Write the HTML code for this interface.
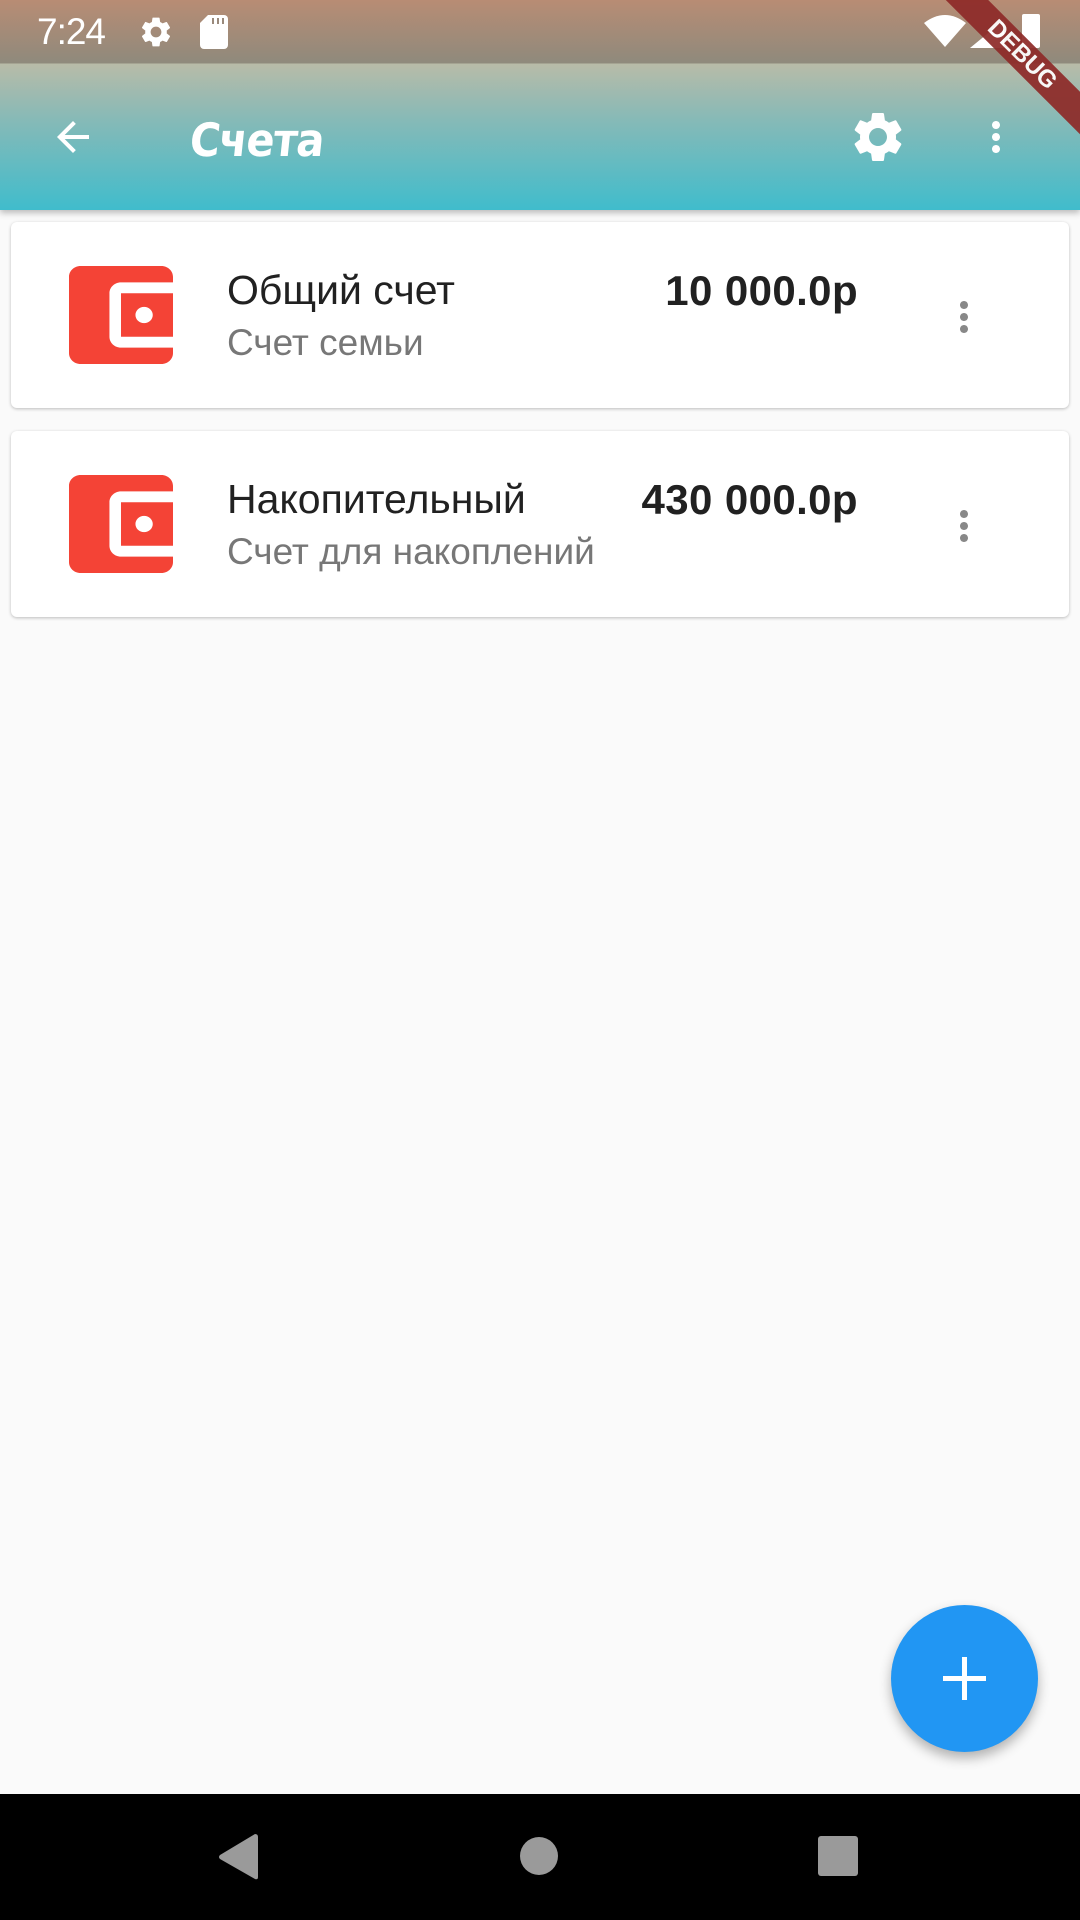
<!DOCTYPE html>
<html><head><meta charset="utf-8"><style>
*{margin:0;padding:0;box-sizing:border-box}
body{width:1080px;height:1920px;background:#fafafa;position:relative;overflow:hidden;font-family:"Liberation Sans","DejaVu Sans",sans-serif}
.top{position:absolute;left:0;top:0;width:1080px;height:210px;background:linear-gradient(180deg,#b88c74 0px,#8f8a7c 63px,#b8bba8 64px,#86bab7 120px,#40bccc 210px);box-shadow:0 3px 6px rgba(0,0,0,.25);overflow:hidden}
.status{position:absolute;top:0;left:0;width:1080px;height:63px}
.time{position:absolute;left:37px;top:11px;color:#fff;font-size:37px;letter-spacing:-1px}
.title{position:absolute;left:190px;top:113px;color:#fff;font-size:46px;font-weight:bold;font-family:"DejaVu Sans Condensed","DejaVu Sans",sans-serif;letter-spacing:-1px;transform:skewX(-6deg)}
.card{position:absolute;left:11px;width:1058px;height:186px;background:#fff;border-radius:6px;box-shadow:0 1px 3px rgba(0,0,0,.25)}
.card svg.w{position:absolute}
.t1{position:absolute;left:216px;top:45px;font-size:41px;color:#212121}
.t2{position:absolute;left:216px;top:100px;font-size:37px;color:#777}
.amt{position:absolute;right:211px;top:45px;font-size:42px;font-weight:bold;color:#212121;letter-spacing:0.4px}
.dots{position:absolute;left:935px;top:71px}
.fab{position:absolute;left:891px;top:1605px;width:147px;height:147px;border-radius:50%;background:#2196f3;box-shadow:0 6px 12px rgba(0,0,0,.3)}
.nav{position:absolute;left:0;top:1794px;width:1080px;height:126px;background:#000}
</style></head><body>
<div class="top">
  <div class="status">
    <div class="time">7:24</div>
    <svg style="position:absolute;left:138px;top:14px" width="36" height="36" viewBox="0 0 24 24"><path fill="#fff" d="M19.14 12.94c.04-.3.06-.61.06-.94 0-.32-.02-.64-.07-.94l2.03-1.58a.49.49 0 00.12-.61l-1.92-3.32a.49.49 0 00-.59-.22l-2.39.96c-.5-.38-1.03-.7-1.62-.94l-.36-2.54a.48.48 0 00-.48-.41h-3.84c-.24 0-.43.17-.47.41l-.36 2.54c-.59.24-1.13.57-1.62.94l-2.39-.96a.48.48 0 00-.59.22L2.74 8.87c-.12.21-.08.47.12.61l2.03 1.58c-.05.3-.09.63-.09.94s.02.64.07.94l-2.03 1.58a.49.49 0 00-.12.61l1.92 3.32c.12.22.37.29.59.22l2.39-.96c.5.38 1.03.7 1.62.94l.36 2.54c.05.24.24.41.48.41h3.84c.24 0 .44-.17.47-.41l.36-2.54c.59-.24 1.13-.56 1.62-.94l2.39.96c.22.08.47 0 .59-.22l1.92-3.32c.12-.22.07-.47-.12-.61l-2.01-1.58zM12 15.6c-1.98 0-3.6-1.62-3.6-3.6s1.62-3.6 3.6-3.6 3.6 1.62 3.6 3.6-1.62 3.6-3.6 3.6z"/></svg>
    <svg style="position:absolute;left:200px;top:15px" width="28" height="34" viewBox="0 0 14 17"><path fill="#fff" d="M4 0h8a2 2 0 012 2v13a2 2 0 01-2 2H2a2 2 0 01-2-2V4z"/><rect x="6" y="1.5" width="1" height="3" fill="#9a8a7c"/><rect x="8.5" y="1.5" width="1" height="3" fill="#9a8a7c"/><rect x="11" y="1.5" width="1" height="3" fill="#9a8a7c"/></svg>
    <svg style="position:absolute;left:924px;top:15px" width="42" height="32" viewBox="0 0 42 32"><path fill="#fff" d="M0 8Q21-8 42 8L21 32z"/></svg>
    <svg style="position:absolute;left:970px;top:20px" width="34" height="28" viewBox="0 0 34 28"><path fill="#fff" d="M34 0V28H0z"/></svg>
    <div style="position:absolute;left:1022px;top:14px;width:18px;height:34px;background:#fff;border-radius:2px"></div>
  </div>
  <svg style="position:absolute;left:49px;top:113px" width="48" height="48" viewBox="0 0 24 24"><path fill="#fff" d="M20 11H7.83l5.59-5.59L12 4l-8 8 8 8 1.41-1.41L7.83 13H20v-2z"/></svg>
  <div class="title">Счета</div>
  <svg style="position:absolute;left:848px;top:107px" width="60" height="60" viewBox="0 0 24 24"><path fill="#fff" d="M19.14 12.94c.04-.3.06-.61.06-.94 0-.32-.02-.64-.07-.94l2.03-1.58a.49.49 0 00.12-.61l-1.92-3.32a.49.49 0 00-.59-.22l-2.39.96c-.5-.38-1.03-.7-1.62-.94l-.36-2.54a.48.48 0 00-.48-.41h-3.84c-.24 0-.43.17-.47.41l-.36 2.54c-.59.24-1.13.57-1.62.94l-2.39-.96a.48.48 0 00-.59.22L2.74 8.87c-.12.21-.08.47.12.61l2.03 1.58c-.05.3-.09.63-.09.94s.02.64.07.94l-2.03 1.58a.49.49 0 00-.12.61l1.92 3.32c.12.22.37.29.59.22l2.39-.96c.5.38 1.03.7 1.62.94l.36 2.54c.05.24.24.41.48.41h3.84c.24 0 .44-.17.47-.41l.36-2.54c.59-.24 1.13-.56 1.62-.94l2.39.96c.22.08.47 0 .59-.22l1.92-3.32c.12-.22.07-.47-.12-.61l-2.01-1.58zM12 15.6c-1.98 0-3.6-1.62-3.6-3.6s1.62-3.6 3.6-3.6 3.6 1.62 3.6 3.6-1.62 3.6-3.6 3.6z"/></svg>
  <svg style="position:absolute;left:972px;top:113px" width="48" height="48" viewBox="0 0 24 24"><path fill="#fff" d="M12 8c1.1 0 2-.9 2-2s-.9-2-2-2-2 .9-2 2 .9 2 2 2zm0 2c-1.1 0-2 .9-2 2s.9 2 2 2 2-.9 2-2-.9-2-2-2zm0 6c-1.1 0-2 .9-2 2s.9 2 2 2 2-.9 2-2-.9-2-2-2z"/></svg>
  <div style="position:absolute;left:872px;top:40px;width:300px;height:30px;background:#8e2a28;opacity:.92;transform:rotate(45deg);color:#fff;font-weight:bold;font-size:24px;text-align:center;line-height:30px;">DEBUG</div>
</div>

<div class="card" style="top:222px">
  <svg class="w" viewBox="3 3 18 18" preserveAspectRatio="none" style="left:58px;top:44px;width:104px;height:98px"><path fill="#f44336" d="M21 18v1c0 1.1-.9 2-2 2H5c-1.11 0-2-.9-2-2V5c0-1.1.89-2 2-2h14c1.1 0 2 .9 2 2v1h-9c-1.11 0-2 .9-2 2v8c0 1.1.89 2 2 2h9zm-9-2h10V8H12v8zm4-2.5c-.83 0-1.5-.67-1.5-1.5s.67-1.5 1.5-1.5 1.5.67 1.5 1.5-.67 1.5-1.5 1.5z"/></svg>
  <div class="t1">Общий счет</div>
  <div class="t2">Счет семьи</div>
  <div class="amt">10 000.0р</div>
  <svg class="dots" width="36" height="48" viewBox="6 0 12 24"><path fill="#888" d="M12 8c1.1 0 2-.9 2-2s-.9-2-2-2-2 .9-2 2 .9 2 2 2zm0 2c-1.1 0-2 .9-2 2s.9 2 2 2 2-.9 2-2-.9-2-2-2zm0 6c-1.1 0-2 .9-2 2s.9 2 2 2 2-.9 2-2-.9-2-2-2z"/></svg>
</div>

<div class="card" style="top:431px">
  <svg class="w" viewBox="3 3 18 18" preserveAspectRatio="none" style="left:58px;top:44px;width:104px;height:98px"><path fill="#f44336" d="M21 18v1c0 1.1-.9 2-2 2H5c-1.11 0-2-.9-2-2V5c0-1.1.89-2 2-2h14c1.1 0 2 .9 2 2v1h-9c-1.11 0-2 .9-2 2v8c0 1.1.89 2 2 2h9zm-9-2h10V8H12v8zm4-2.5c-.83 0-1.5-.67-1.5-1.5s.67-1.5 1.5-1.5 1.5.67 1.5 1.5-.67 1.5-1.5 1.5z"/></svg>
  <div class="t1">Накопительный</div>
  <div class="t2">Счет для накоплений</div>
  <div class="amt">430 000.0р</div>
  <svg class="dots" width="36" height="48" viewBox="6 0 12 24"><path fill="#888" d="M12 8c1.1 0 2-.9 2-2s-.9-2-2-2-2 .9-2 2 .9 2 2 2zm0 2c-1.1 0-2 .9-2 2s.9 2 2 2 2-.9 2-2-.9-2-2-2zm0 6c-1.1 0-2 .9-2 2s.9 2 2 2 2-.9 2-2-.9-2-2-2z"/></svg>
</div>

<div class="fab">
  <div style="position:absolute;left:52px;top:71px;width:43px;height:5px;background:#fff"></div>
  <div style="position:absolute;left:71px;top:52px;width:5px;height:43px;background:#fff"></div>
</div>

<div class="nav">
  <svg style="position:absolute;left:218px;top:40px" width="40" height="46" viewBox="0 0 40 46"><path fill="#9a9a9a" d="M37 0Q40 0 40 3V43Q40 46 37 45L2 25Q0 23 2 21z"/></svg>
  <div style="position:absolute;left:520px;top:43px;width:38px;height:38px;border-radius:50%;background:#9a9a9a"></div>
  <div style="position:absolute;left:818px;top:42px;width:40px;height:40px;border-radius:3px;background:#9a9a9a"></div>
</div>
</body></html>
